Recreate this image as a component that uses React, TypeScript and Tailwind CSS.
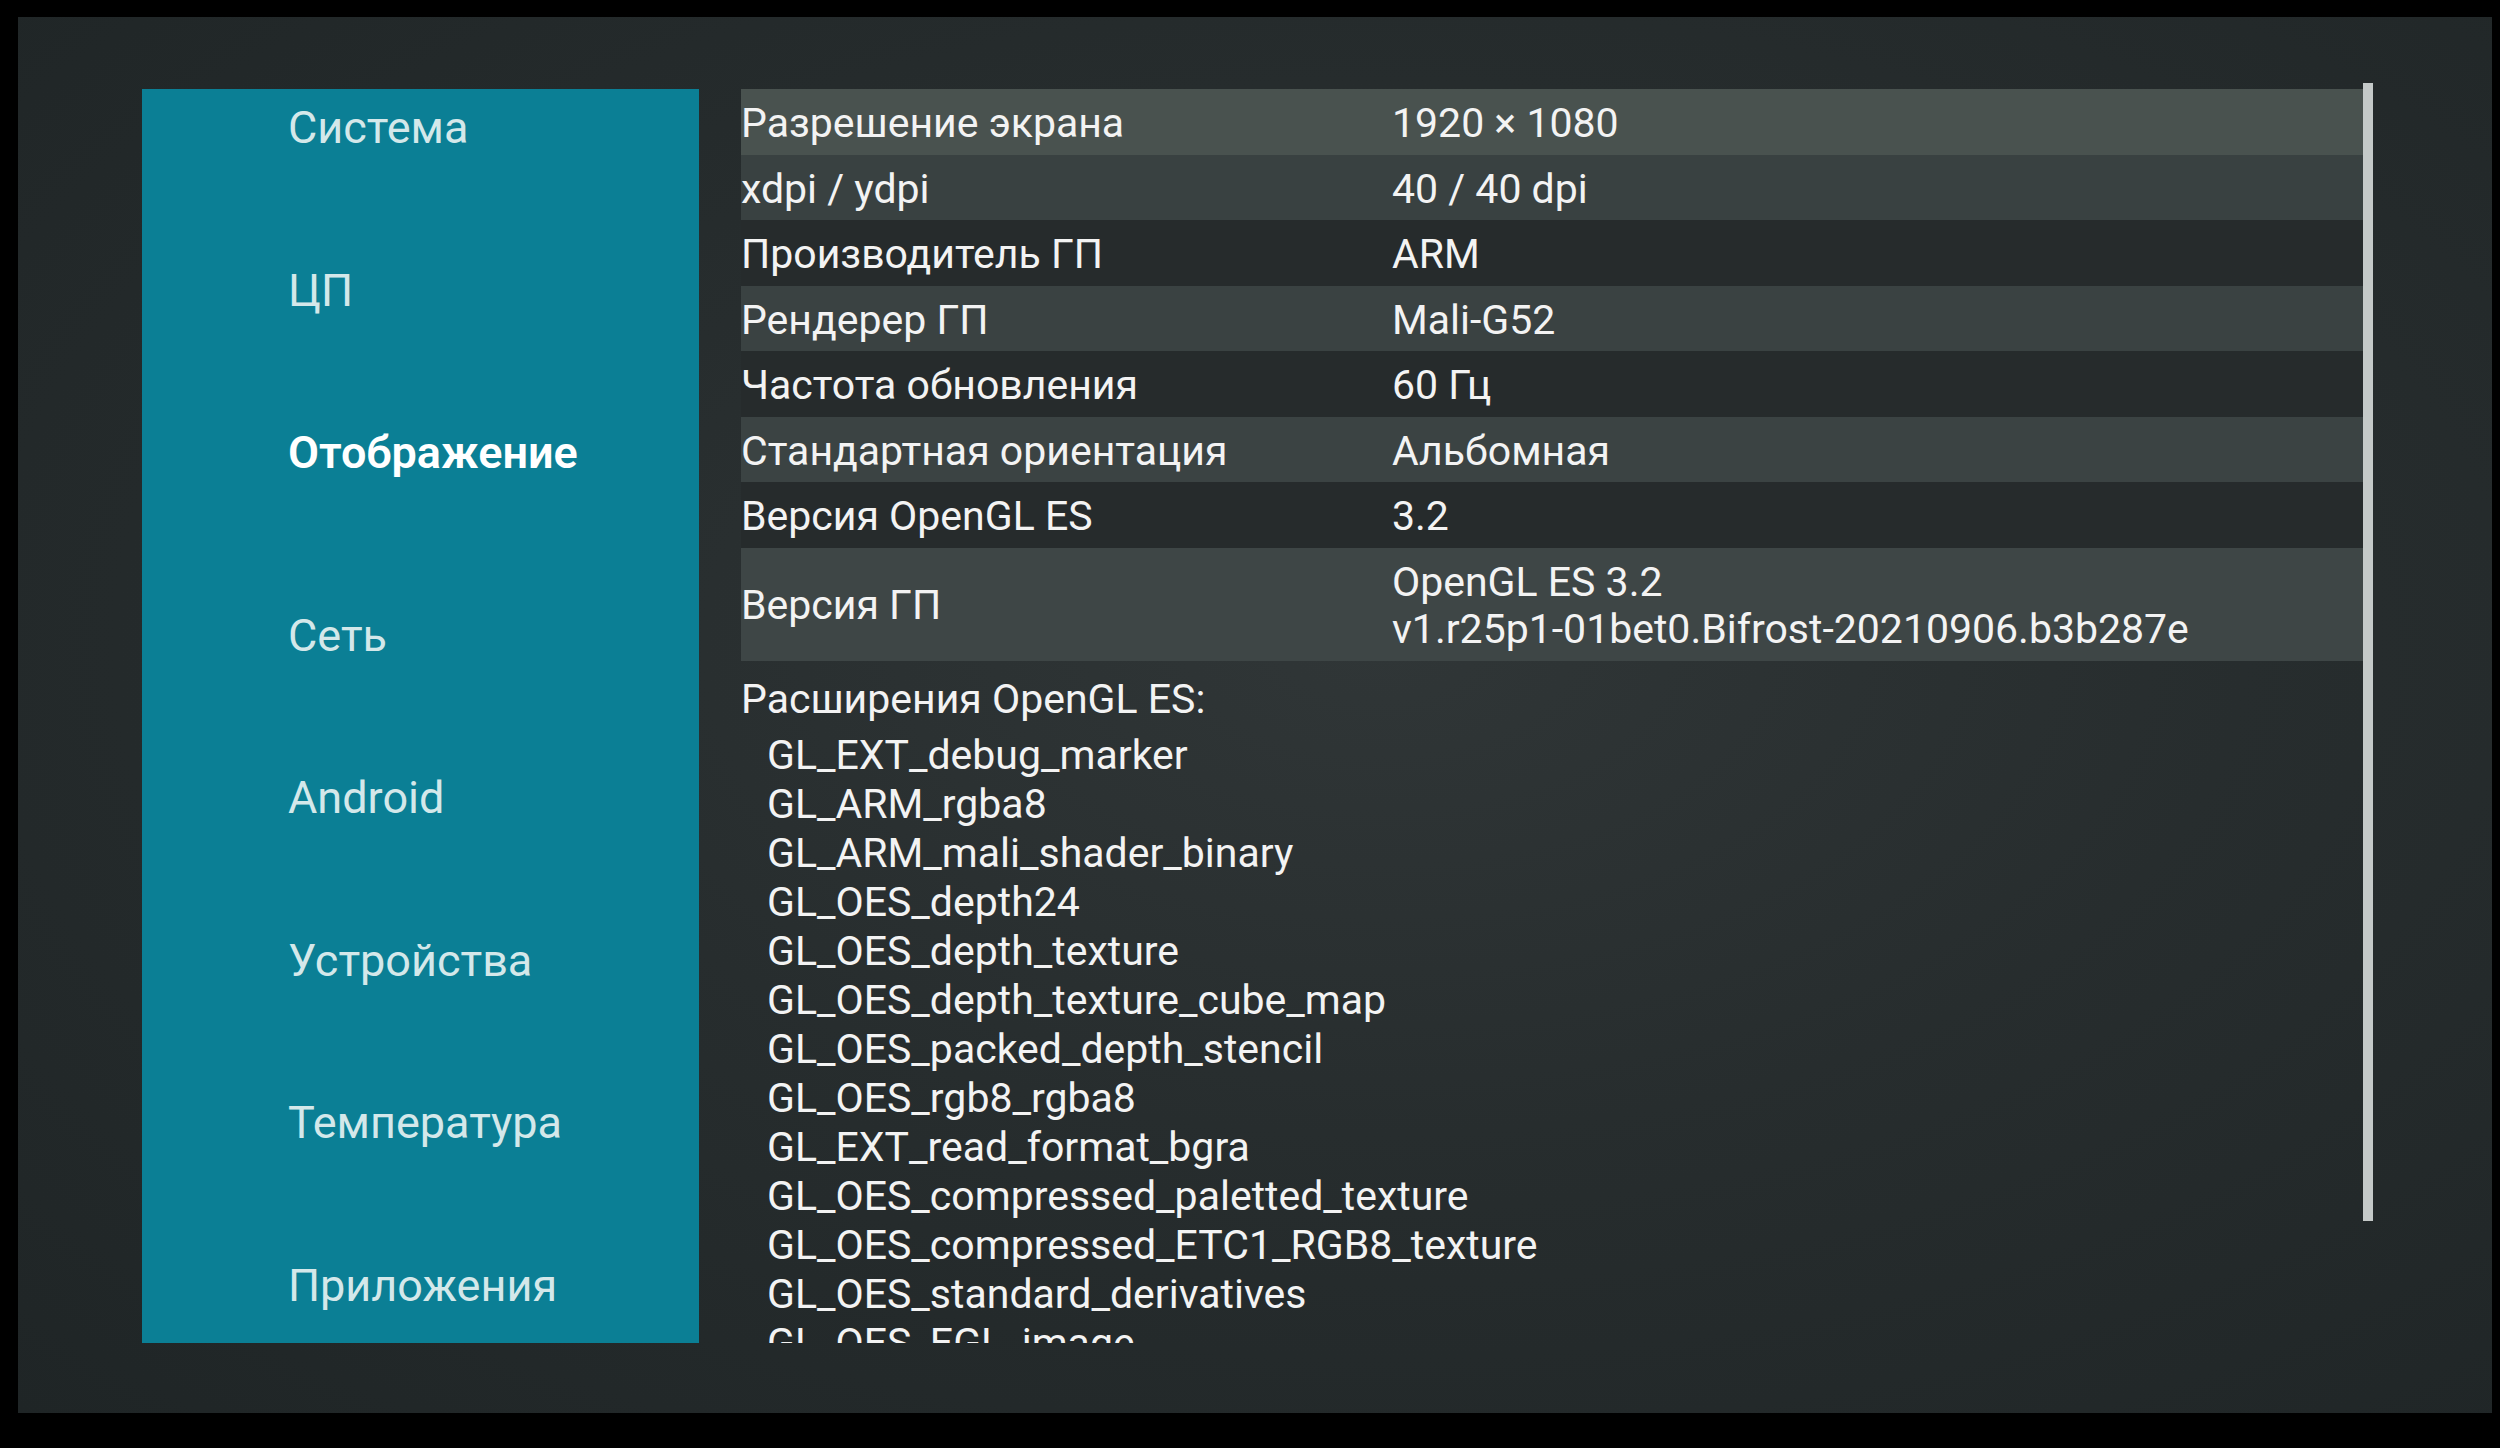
const menu = [
  { label: 'Система' },
  { label: 'ЦП' },
  { label: 'Отображение', active: true },
  { label: 'Сеть' },
  { label: 'Android' },
  { label: 'Устройства' },
  { label: 'Температура' },
  { label: 'Приложения' },
];

const rows: { k: string; v: string[] }[] = [
  { k: 'Разрешение экрана', v: ['1920 × 1080'] },
  { k: 'xdpi / ydpi', v: ['40 / 40 dpi'] },
  { k: 'Производитель ГП', v: ['ARM'] },
  { k: 'Рендерер ГП', v: ['Mali-G52'] },
  { k: 'Частота обновления', v: ['60 Гц'] },
  { k: 'Стандартная ориентация', v: ['Альбомная'] },
  { k: 'Версия OpenGL ES', v: ['3.2'] },
  { k: 'Версия ГП', v: ['OpenGL ES 3.2', 'v1.r25p1-01bet0.Bifrost-20210906.b3b287e'] },
];

const rowBg = ['bg-[#49524f]', 'bg-[#394141]', 'bg-[#262b2c]', 'bg-[#3a4242]', 'bg-[#262b2c]', 'bg-[#3b4343]', 'bg-[#262b2c]', 'bg-[#3e4646]'];

const extensions = [
  'GL_EXT_debug_marker',
  'GL_ARM_rgba8',
  'GL_ARM_mali_shader_binary',
  'GL_OES_depth24',
  'GL_OES_depth_texture',
  'GL_OES_depth_texture_cube_map',
  'GL_OES_packed_depth_stencil',
  'GL_OES_rgb8_rgba8',
  'GL_EXT_read_format_bgra',
  'GL_OES_compressed_paletted_texture',
  'GL_OES_compressed_ETC1_RGB8_texture',
  'GL_OES_standard_derivatives',
  'GL_OES_EGL_image',
];

export default function App() {
  return (
    <div className="w-[2500px] h-[1448px] bg-black pt-[17px] pl-[18px] pr-[8px] pb-[35px] font-['Roboto',sans-serif]">
      <div className="w-full h-full flex pl-[124px] pt-[66px] bg-[radial-gradient(ellipse_at_55%_45%,#303637_0%,#272d2e_45%,#1f2526_100%)]">
        {/* left menu */}
        <nav className="w-[557px] h-[1254px] mt-[6px] shrink-0 overflow-hidden bg-[#0b7f95] flex flex-col">
          {menu.map(m => (
            <div key={m.label} className={m.active ? 'h-[182.5px] shrink-0 pl-[146px]' : 'h-[162.5px] shrink-0 pl-[146px]'}>
              <span className={m.active
                ? 'block leading-[78px] text-[45px] font-semibold text-white'
                : 'block leading-[78px] text-[45px] font-normal text-[#d4e8ea]'}>
                {m.label}
              </span>
            </div>
          ))}
        </nav>

        {/* info panel */}
        <main className="ml-[42px] flex">
          <div className="w-[1622px] h-[1260px] pt-[6px] overflow-hidden text-[41px] text-[#f3f3f3]">
            {rows.map((r, i) => (
              <div key={r.k} className={`flex items-center pt-[11px] pb-[7px] ${rowBg[i]}`}>
                <div className="w-[651px] shrink-0 leading-[47.5px]">{r.k}</div>
                <div className="leading-[47.5px]">
                  {r.v.map(v => <div key={v}>{v}</div>)}
                </div>
              </div>
            ))}
            <div className="mt-[14px] leading-[49px] mb-[7px]">Расширения OpenGL ES:</div>
            <div className="pl-[26px]">
              {extensions.map(e => <div key={e} className="leading-[49px]">{e}</div>)}
            </div>
          </div>
          <div className="w-[10px] h-[1138px] bg-[#c4c9c8]" />
        </main>
      </div>
    </div>
  );
}
